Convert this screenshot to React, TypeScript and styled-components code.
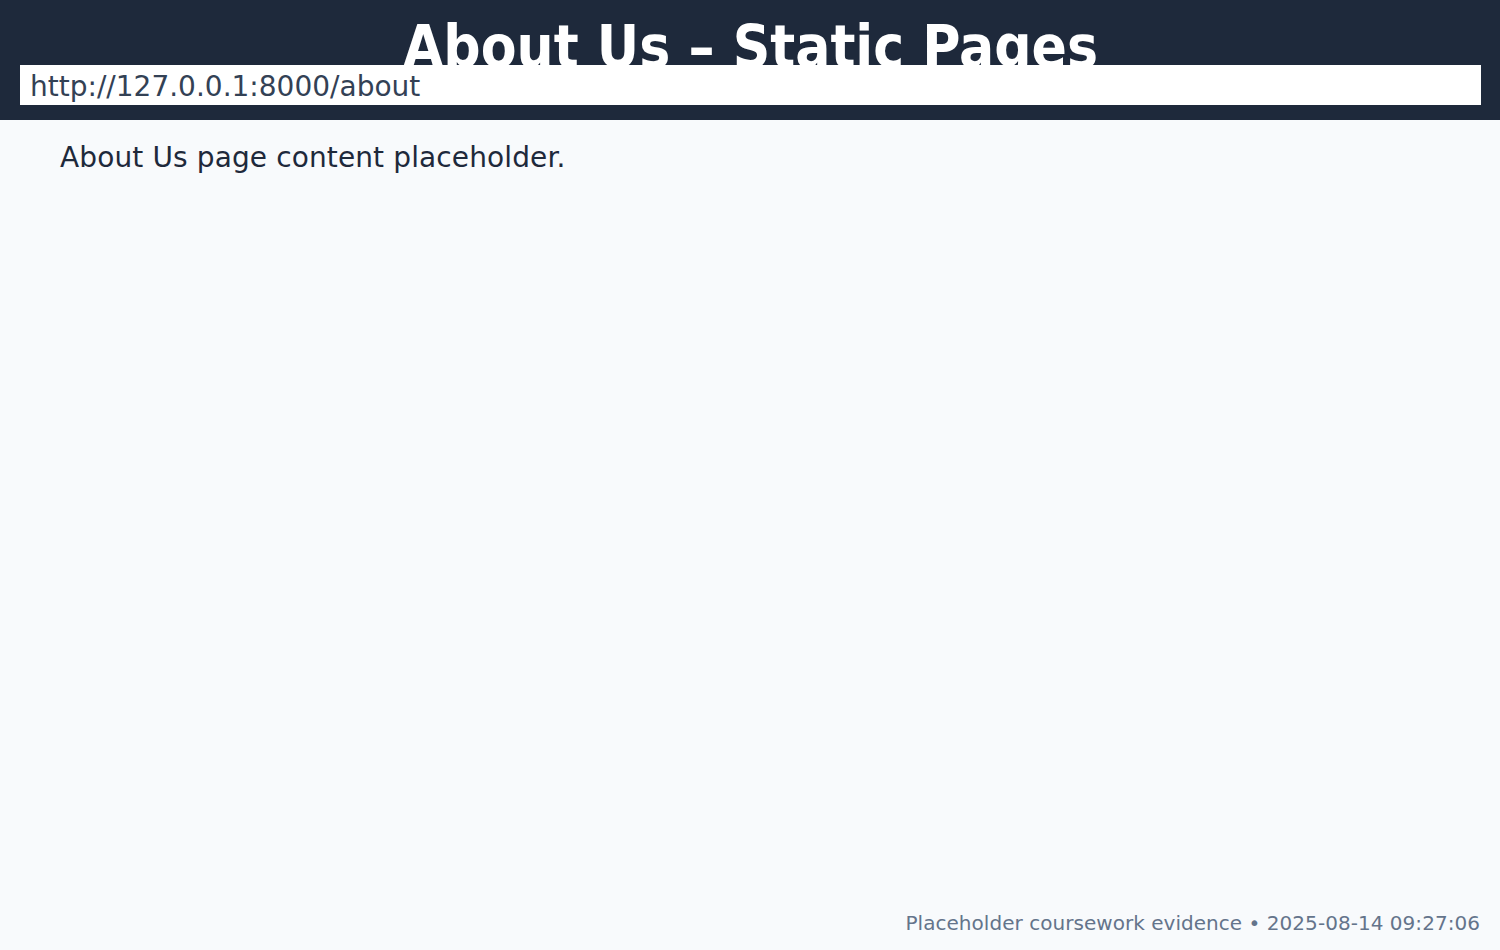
import React from "react";
import styled, { createGlobalStyle } from "styled-components";

const Global = createGlobalStyle`
  html, body { margin: 0; padding: 0; }
  body {
    background: #f8fafc;
    font-family: "DejaVu Sans", "Liberation Sans", sans-serif;
  }
`;

const Page = styled.div`
  min-height: 100vh;
  display: flex;
  flex-direction: column;
  box-sizing: border-box;
`;

const Header = styled.header`
  background: #1e293b;
  padding: 18px 19px 15px 20px;
  display: flex;
  flex-direction: column;
`;

const TitleClip = styled.div`
  height: 47px;
  overflow: hidden;
`;

const Title = styled.h1`
  margin: 0;
  color: #ffffff;
  font-family: "DejaVu Sans Condensed", "DejaVu Sans", sans-serif;
  font-weight: bold;
  font-size: 58px;
  line-height: 1;
  text-align: center;
  white-space: nowrap;
`;

const UrlBar = styled.div`
  background: #ffffff;
  height: 40px;
  line-height: 40px;
  padding: 2px 10px 0;
  box-sizing: border-box;
  font-size: 28px;
  color: #334155;
  white-space: nowrap;
`;

const Main = styled.main`
  padding: 21px 60px;
  flex: 1;
`;

const Text = styled.p`
  margin: 0;
  font-size: 28px;
  letter-spacing: 0.12px;
  color: #1e293b;
`;

const Footer = styled.footer`
  padding: 0 20px 15px;
  text-align: right;
  font-size: 20px;
  letter-spacing: 0.04px;
  color: #64748b;
`;

export default function App() {
  return (
    <Page>
      <Global />
      <Header>
        <TitleClip>
          <Title>About Us – Static Pages</Title>
        </TitleClip>
        <UrlBar>http://127.0.0.1:8000/about</UrlBar>
      </Header>
      <Main>
        <Text>About Us page content placeholder.</Text>
      </Main>
      <Footer>Placeholder coursework evidence • 2025-08-14 09:27:06</Footer>
    </Page>
  );
}
